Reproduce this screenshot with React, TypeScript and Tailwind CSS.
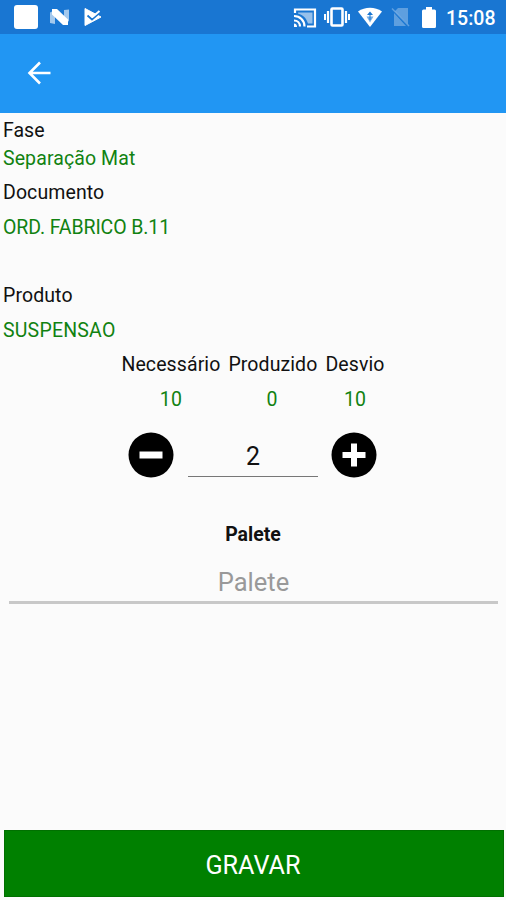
import React, { useState } from "react";

// android status bar, notifications on the left and system icons on the right
function StatusBar() {
  return (
    <div className="flex h-[34px] shrink-0 items-center bg-[#1976d2] text-white">
      <div className="ml-[14px] h-6 w-6 rounded-[3px] bg-white"></div>
      <svg className="ml-[11px] h-[18px] w-[22px]" viewBox="0 0 22 18">
        <path d="M1 4.500 6 2v14l-5-1zM15 2l5-.5V13l-5 3z" fill="#fff" opacity=".6" />
        <path d="M3 1h5l11 10.500V17h-5L3 6.500z" fill="#fff" />
      </svg>
      <svg className="ml-[12px] h-[20px] w-[20px]" viewBox="0 0 20 20">
        <path d="M2 1.500 18 10 2 18.500z" fill="#fff" strokeLinejoin="round" stroke="#fff" />
        <path d="m4.500 8.500 4.500 4 9-8" fill="none" stroke="#1976d2" strokeWidth="1.800" />
        <path d="m6 6.500 3.500 3.500 7-6" fill="none" stroke="#fff" strokeWidth="2" />
      </svg>
      <div className="ml-auto flex items-center">
        {/* cast */}
        <svg className="mt-px h-5 w-6" viewBox="0 0 24 20" fill="none" stroke="#fff">
          <path d="M2 5V1.500h20v17h-8" strokeWidth="2.200" />
          <path d="M5 4.500h14.500v11h-4.500C13 9.500 10.500 7.500 5 5.500z" fill="#fff" stroke="none" opacity=".55" />
          <path d="M1 8c6 0 10.500 4.500 10.500 10.500M1 12.500c3.500 0 6 2.500 6 6" strokeWidth="2.200" />
          <path d="M1 15.500c2 0 3 1.500 3 3.500H1z" fill="#fff" stroke="none" />
        </svg>
        {/* vibrate */}
        <svg className="ml-[7px] h-5 w-[26px]" viewBox="0 0 26 20" fill="none" stroke="#fff">
          <rect x="7.500" y="1.500" width="11" height="17" rx="1" strokeWidth="2.600" />
          <path d="M4 4v12M22 4v12" strokeWidth="2.200" />
          <path d="M1 7v6M25 7v6" strokeWidth="2" />
        </svg>
        {/* wifi */}
        <svg className="ml-[8px] h-5 w-6" viewBox="0 0 24 20">
          <path d="M0 4.500C7-.5 17-.5 24 4.500L12 20z" fill="#fff" />
          <path d="m12 4.500 3 3.500H9z" fill="#1976d2" />
          <path d="M8.500 9.500h7l-3.500 6z" fill="#1976d2" opacity=".6" />
          <path d="M12 8v5" stroke="#1976d2" />
        </svg>
        {/* no sim */}
        <svg className="ml-[9px] h-5 w-[20px]" viewBox="0 0 20 20">
          <path d="M7 1h10v16L4 4zM3 6l12 13H3z" fill="#fff" opacity=".3" />
          <path d="m1 1.500 17 17.500" stroke="#fff" strokeWidth="1.500" opacity=".3" />
        </svg>
        {/* battery */}
        <svg className="ml-[10px] h-[21px] w-[16px]" viewBox="0 0 16 21" fill="#fff">
          <path d="M5 0h6v2.500h2.500q1.500 0 1.500 1.500v15.500q0 1.500-1.500 1.500h-11Q1 21 1 19.500V4q0-1.500 1.500-1.500H5z" />
        </svg>
        <span className="mt-[3px] mr-[11px] ml-[9px] w-[49px] text-[19.5px] leading-6 font-medium whitespace-nowrap">15:08</span>
      </div>
    </div>
  );
}

export default function App() {
  const [quantity, setQuantity] = useState(2);
  const [palete, setPalete] = useState("");

  return (
    <main className="flex h-screen flex-col bg-[#fbfbfb] font-[Roboto,sans-serif] text-[19.5px] leading-7 text-[#111]">
      <StatusBar />
      <header className="flex h-[79px] shrink-0 items-center bg-[#2196f3]">
        <button className="mb-[2px] ml-[27px]">
          <svg className="h-[24px] w-[24px]" viewBox="0 0 24 24" fill="none" stroke="#fff" strokeWidth="2.600">
            <path d="M23.500 12H2.500M13 1.500 2.500 12 13 22.500" />
          </svg>
        </button>
      </header>

      {/* order info */}
      <div className="mt-[4px] pl-[3px]">
        <p>Fase</p>
        <p className="tracking-[0.1px] text-[#118211]">Separação Mat</p>
        <p className="mt-[6px] tracking-[0.1px]">Documento</p>
        <p className="mt-[7px] tracking-[-0.1px] text-[#118211]">ORD. FABRICO B.11</p>
        <p className="mt-[40px] tracking-[0.1px]">Produto</p>
        <p className="mt-[7px] tracking-[0.2px] text-[#118211]">SUSPENSAO</p>
      </div>

      {/* quantities */}
      <div className="mt-[6px] flex justify-center gap-[8px] text-center tracking-[0.1px]">
        <div>
          <p>Necessário</p>
          <p className="mt-[7px] text-[#118211]">10</p>
        </div>
        <div>
          <p>Produzido</p>
          <p className="mt-[7px] mr-[2px] text-[#118211]">0</p>
        </div>
        <div>
          <p>Desvio</p>
          <p className="mt-[7px] text-[#118211]">10</p>
        </div>
      </div>

      <div className="mt-[18px] mr-px flex justify-center">
        <button onClick={() => setQuantity(quantity - 1)}>
          <svg className="h-[46px] w-[46px]" viewBox="0 0 46 46">
            <circle cx="23" cy="23" r="22.500" />
            <path d="M11.500 23h23" stroke="#fff" strokeWidth="7" />
          </svg>
        </button>
        <div className="mr-[13px] ml-[14px] h-[45px] w-[130px] border-b border-[#777] text-center text-[25px] leading-[50px]">{quantity}</div>
        <button onClick={() => setQuantity(quantity + 1)}>
          <svg className="h-[46px] w-[46px]" viewBox="0 0 46 46">
            <circle cx="23" cy="23" r="22.500" />
            <path d="M11.500 23h23M23 11.500v23" stroke="#fff" strokeWidth="6" />
          </svg>
        </button>
      </div>

      <p className="mt-[43px] text-center font-bold">Palete</p>
      <input
        className="mt-[15px] mr-[8px] ml-[9px] h-[40px] border-b-[3px] border-[#c8c8c8] pb-px text-center text-[25.5px] outline-none placeholder:text-[#999]"
        placeholder="Palete"
        value={palete}
        onChange={(e) => setPalete(e.target.value)}
      />

      <button className="mr-[2px] ml-[4px] mt-auto mb-[3px] h-[67px] shrink-0 border border-[#007000] bg-[#008000] pt-[4px] pr-[2px] text-[25.2px] text-white">GRAVAR</button>
    </main>
  );
}
